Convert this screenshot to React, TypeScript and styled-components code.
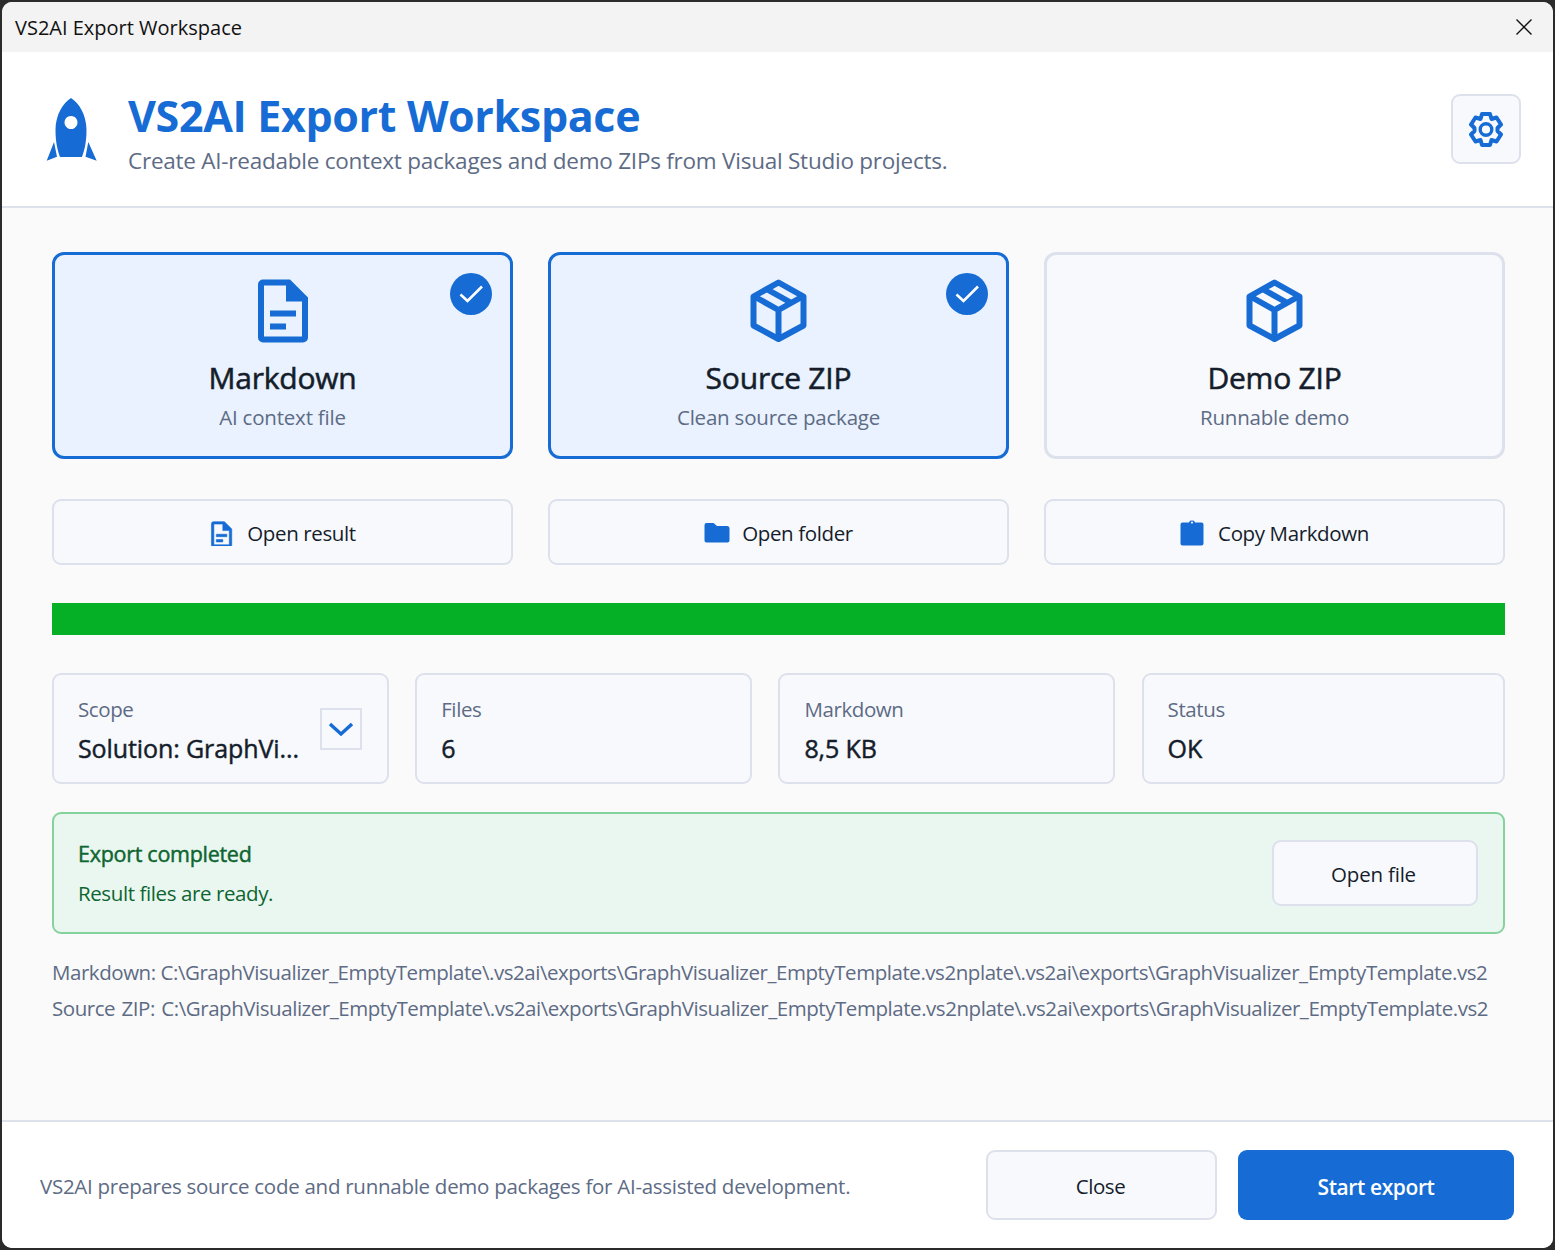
import React from "react";
import styled, { createGlobalStyle } from "styled-components";

const Global = createGlobalStyle`
  html, body { margin: 0; padding: 0; background: #2b2b2b; }
  * { box-sizing: border-box; }
  body { font-family: "Open Sans", "Noto Sans", sans-serif; }
`;

const blue = "#166cd4";

const Frame = styled.div`
  width: 1555px;
  height: 1250px;
  padding: 2px;
  background: #2b2b2b;
`;
const Win = styled.div`
  width: 1551px;
  height: 1246px;
  border-radius: 10px;
  overflow: hidden;
  background: #fafafa;
  display: flex;
  flex-direction: column;
`;
const TitleBar = styled.div`
  height: 50px;
  flex: none;
  background: #f3f3f3;
  display: flex;
  align-items: center;
  justify-content: space-between;
  padding: 0 21px 0 13px;
  color: #111;
  font-size: 20px;
`;
const CloseGlyph = styled.svg`
  width: 16px;
  height: 16px;
  display: block;
`;
const Header = styled.header`
  height: 156px;
  flex: none;
  background: #fff;
  border-bottom: 2px solid #dde1ec;
  display: flex;
  align-items: center;
  padding: 0 32px 0 42px;
`;
const Rocket = styled.svg`
  width: 54px;
  height: 66px;
  flex: none;
  margin: 0 30px 0 0;
  align-self: flex-start;
  margin-top: 46px;
`;
const HeaderText = styled.div`
  flex: 1;
  align-self: flex-start;
  margin-top: 37px;
  display: flex;
  flex-direction: column;
`;
const Heading = styled.h1`
  margin: 0;
  color: ${blue};
  font-size: 43px;
  line-height: 54px;
  font-weight: 700;
  letter-spacing: -0.35px;
`;
const Sub = styled.div`
  margin-top: 3px;
  color: #5d6b85;
  font-size: 22.5px;
  line-height: 30px;
  letter-spacing: -0.24px;
`;
const GearButton = styled.button`
  width: 70px;
  height: 70px;
  padding: 0;
  display: flex;
  align-items: center;
  justify-content: center;
  background: #f7f9fd;
  border: 2px solid #dde1ec;
  border-radius: 9px;
`;
const Main = styled.main`
  flex: 1;
  display: flex;
  flex-direction: column;
  padding: 44px 48px 0 50px;
  min-height: 0;
`;
const ThreeCols = styled.div`
  display: grid;
  grid-template-columns: repeat(3, 461px);
  column-gap: 35px;
`;
const Card = styled.div<{ $on?: boolean }>`
  position: relative;
  height: 207px;
  border-radius: 12px;
  border: 3px solid ${(p) => (p.$on ? blue : "#dde1ec")};
  background: ${(p) => (p.$on ? "#e9f2fe" : "#f8f9fd")};
  display: flex;
  flex-direction: column;
  align-items: center;
  padding-top: 22px;
`;
const CardIcon = styled.svg`
  width: 66px;
  height: 66px;
  display: block;
`;
const CardTitle = styled.div`
  margin-top: 15px;
  color: #151d2b;
  font-size: 30px;
  line-height: 40px;
  font-weight: 400;
  -webkit-text-stroke: 0.55px #151d2b;
  letter-spacing: -0.2px;
`;
const CardSub = styled.div`
  margin-top: 5px;
  color: #5d6b85;
  font-size: 20.5px;
  line-height: 28px;
  letter-spacing: -0.2px;
`;
const CheckBadge = styled.svg`
  position: absolute;
  top: 18px;
  right: 18px;
  width: 42px;
  height: 42px;
`;
const ActionRow = styled(ThreeCols)`
  margin-top: 40px;
`;
const ActionButton = styled.button`
  height: 66px;
  padding: 1px 0 0;
  display: flex;
  align-items: center;
  justify-content: center;
  gap: 12px;
  background: #f8f9fd;
  border: 2px solid #dde1ec;
  border-radius: 9px;
  color: #151d2b;
  font-family: inherit;
  font-size: 20.5px;
  letter-spacing: -0.38px;
`;
const ActionIcon = styled.svg`
  width: 26px;
  height: 26px;
  display: block;
  flex: none;
`;
const Progress = styled.div`
  margin-top: 38px;
  height: 32px;
  background: #05b026;
`;
const Stats = styled.div`
  margin-top: 38px;
  display: grid;
  grid-template-columns: 337px 337px 337px 1fr;
  column-gap: 26.2px;
`;
const Stat = styled.div`
  height: 111px;
  position: relative;
  background: #f8f9fd;
  border: 2px solid #dde1ec;
  border-radius: 9px;
  padding: 19px 24px 0;
`;
const StatLabel = styled.div`
  color: #5d6b85;
  font-size: 20.5px;
  line-height: 30px;
  letter-spacing: -0.4px;
`;
const StatValue = styled.div`
  margin-top: 8px;
  color: #151d2b;
  font-size: 25px;
  line-height: 32px;
  font-weight: 400;
  -webkit-text-stroke: 0.45px #151d2b;
  letter-spacing: -0.1px;
`;
const DropButton = styled.div`
  position: absolute;
  top: 33px;
  right: 25px;
  width: 42px;
  height: 42px;
  border: 2px solid #dde1ec;
  display: flex;
  align-items: center;
  justify-content: center;
`;
const Banner = styled.div`
  margin-top: 28px;
  height: 122px;
  background: #eaf7f0;
  border: 2px solid #84d29c;
  border-radius: 9px;
  display: flex;
  align-items: center;
  justify-content: space-between;
  padding: 0 25px 0 24px;
`;
const BannerTitle = styled.div`
  color: #0d6530;
  font-size: 21.5px;
  line-height: 30px;
  font-weight: 400;
  -webkit-text-stroke: 0.45px #0d6530;
  letter-spacing: -0.28px;
`;
const BannerText = styled.div`
  margin-top: 9px;
  color: #0d6530;
  font-size: 20.5px;
  line-height: 30px;
  letter-spacing: -0.4px;
`;
const OpenFile = styled.button`
  width: 206px;
  height: 66px;
  padding: 1px 3px 0 0;
  background: #f8f9fd;
  border: 2px solid #dde1ec;
  border-radius: 9px;
  color: #151d2b;
  font-family: inherit;
  font-size: 20.5px;
  letter-spacing: -0.2px;
`;
const Paths = styled.div`
  margin-top: 20px;
`;
const PathLine = styled.div`
  color: #5d6b85;
  font-size: 20.5px;
  line-height: 36px;
  letter-spacing: -0.45px;
  white-space: nowrap;
  overflow: hidden;
`;
const SourcePathLine = styled(PathLine)`
  word-spacing: 1.5px;
`;
const Footer = styled.footer`
  height: 128px;
  flex: none;
  background: #fff;
  border-top: 2px solid #dde1ec;
  display: flex;
  align-items: center;
  padding: 0 39px 0 38px;
`;
const FootNote = styled.div`
  flex: 1;
  padding-top: 2px;
  color: #5d6b85;
  font-size: 20.5px;
  letter-spacing: -0.27px;
`;
const CloseButton = styled.button`
  width: 231px;
  height: 70px;
  margin-right: 21px;
  padding: 2px 2px 0 0;
  background: #f8f9fd;
  border: 2px solid #dde1ec;
  border-radius: 9px;
  color: #151d2b;
  font-family: inherit;
  font-size: 20.5px;
  letter-spacing: -0.4px;
`;
const StartButton = styled.button`
  width: 276px;
  height: 70px;
  padding: 3px 0 0;
  background: ${blue};
  border: none;
  border-radius: 9px;
  color: #fff;
  font-family: inherit;
  font-size: 21px;
  font-weight: 600;
  letter-spacing: -0.4px;
`;

const DocPath = () => (
  <path
    fillRule="evenodd"
    d="M2.5 0 H16 L25 9 V29 a2.5 2.5 0 0 1 -2.5 2.5 H2.5 A2.5 2.5 0 0 1 0 29 V2.5 A2.5 2.5 0 0 1 2.5 0 Z M3 3 V28.5 H22 V11 H14 V3 Z M6 15.5 H19 V18.5 H6 Z M6 22 H14 V25 H6 Z"
    fill={blue}
  />
);
const DocIcon = () => (
  <CardIcon viewBox="-4 -1.25 33 33" aria-hidden="true">
    <DocPath />
  </CardIcon>
);
const BoxIcon = () => (
  <CardIcon viewBox="0.5 0 66 66" aria-hidden="true">
    <g fill="none" stroke={blue} strokeWidth="6" strokeLinejoin="round">
      <path d="M33 5.5 L58 19.5 V48.5 L33 62 L8 48.5 V19.5 Z" />
      <path d="M8 19 L33 33 L58 19 M33 33 V60" />
      <path d="M20 11.5 L46 26" />
    </g>
  </CardIcon>
);
const Check = () => (
  <CheckBadge viewBox="0 0 42 42" aria-hidden="true">
    <circle cx="21" cy="21" r="21" fill={blue} />
    <path d="M10.5 21.5 L17.5 28 L32 13.5" fill="none" stroke="#fff" strokeWidth="2.6" />
  </CheckBadge>
);

export default function App() {
  return (
    <Frame>
      <Global />
      <Win>
        <TitleBar>
          <span>VS2AI Export Workspace</span>
          <CloseGlyph viewBox="0 0 16 16" aria-hidden="true">
            <path d="M.5.5 L15.5 15.5 M15.5.5 L.5 15.5" stroke="#111" strokeWidth="1.4" fill="none" />
          </CloseGlyph>
        </TitleBar>
        <Header>
          <Rocket viewBox="0 0 54 66" aria-hidden="true">
            <path
              fillRule="evenodd"
              fill={blue}
              d="M27 0 C35 5 42.5 17 42.5 32 C42.5 46 40 53 38 59 H16 C14 53 11.5 46 11.5 32 C11.5 17 19 5 27 0 Z M27 18 a6.5 6.5 0 1 0 .01 0 Z"
            />
            <path fill={blue} d="M10 44 L13 58.7 L2.7 62.7 Z M44.3 44 L41.5 58.7 L52.7 62.7 Z" />
          </Rocket>
          <HeaderText>
            <Heading>VS2AI Export Workspace</Heading>
            <Sub>Create AI-readable context packages and demo ZIPs from Visual Studio projects.</Sub>
          </HeaderText>
          <GearButton aria-label="Settings">
            <svg width="34" height="35" viewBox="0 0 34 35" aria-hidden="true">
              <path
                fill="none"
                stroke={blue}
                strokeWidth="4"
                strokeLinejoin="round"
                d="M13 2 H21 L22.5 7 L27.5 5.5 L32 12.5 L28.5 16 V19 L32 22.5 L27.5 29.5 L22.5 28 L21 33 H13 L11.5 28 L6.5 29.5 L2 22.5 L5.5 19 V16 L2 12.5 L6.5 5.5 L11.5 7 Z"
              />
              <circle cx="17" cy="17.5" r="5.8" fill="none" stroke={blue} strokeWidth="3.4" />
            </svg>
          </GearButton>
        </Header>
        <Main>
          <ThreeCols>
            <Card $on>
              <DocIcon />
              <CardTitle>Markdown</CardTitle>
              <CardSub>AI context file</CardSub>
              <Check />
            </Card>
            <Card $on>
              <BoxIcon />
              <CardTitle>Source ZIP</CardTitle>
              <CardSub>Clean source package</CardSub>
              <Check />
            </Card>
            <Card>
              <BoxIcon />
              <CardTitle>Demo ZIP</CardTitle>
              <CardSub>Runnable demo</CardSub>
            </Card>
          </ThreeCols>
          <ActionRow>
            <ActionButton>
              <ActionIcon viewBox="-3 -2 32 32" aria-hidden="true">
                <g stroke={blue} strokeWidth="0.7">
                  <DocPath />
                </g>
              </ActionIcon>
              Open result
            </ActionButton>
            <ActionButton>
              <ActionIcon viewBox="0 0 26 26" aria-hidden="true">
                <path fill={blue} d="M2.5 3 H9.5 L13 6 H23 A2.5 2.5 0 0 1 25.5 8.5 V20.5 A2 2 0 0 1 23.5 22.5 H2.5 A2 2 0 0 1 .5 20.5 V5 A2 2 0 0 1 2.5 3 Z" />
              </ActionIcon>
              Open folder
            </ActionButton>
            <ActionButton>
              <ActionIcon viewBox="1 0 26 26" aria-hidden="true">
                <path
                  fillRule="evenodd"
                  fill={blue}
                  d="M3.5 2.5 H10 L11 .8 Q13 0 15 .8 L16 2.5 H22.5 A2 2 0 0 1 24.5 4.5 V23.5 A2 2 0 0 1 22.5 25.5 H3.5 A2 2 0 0 1 1.5 23.5 V4.5 A2 2 0 0 1 3.5 2.5 Z M13 1.6 a1 1 0 1 0 .01 0 Z"
                />
              </ActionIcon>
              Copy Markdown
            </ActionButton>
          </ActionRow>
          <Progress />
          <Stats>
            <Stat>
              <StatLabel>Scope</StatLabel>
              <StatValue>Solution: GraphVi...</StatValue>
              <DropButton>
                <svg width="26" height="16" viewBox="0 0 26 16" aria-hidden="true">
                  <path d="M2 3 L13 13 L24 3" fill="none" stroke={blue} strokeWidth="3.4" />
                </svg>
              </DropButton>
            </Stat>
            <Stat>
              <StatLabel>Files</StatLabel>
              <StatValue>6</StatValue>
            </Stat>
            <Stat>
              <StatLabel>Markdown</StatLabel>
              <StatValue>8,5 KB</StatValue>
            </Stat>
            <Stat>
              <StatLabel>Status</StatLabel>
              <StatValue>OK</StatValue>
            </Stat>
          </Stats>
          <Banner>
            <div>
              <BannerTitle>Export completed</BannerTitle>
              <BannerText>Result files are ready.</BannerText>
            </div>
            <OpenFile>Open file</OpenFile>
          </Banner>
          <Paths>
            <PathLine>Markdown: C:\GraphVisualizer_EmptyTemplate\.vs2ai\exports\GraphVisualizer_EmptyTemplate.vs2nplate\.vs2ai\exports\GraphVisualizer_EmptyTemplate.vs2</PathLine>
            <SourcePathLine>Source ZIP: C:\GraphVisualizer_EmptyTemplate\.vs2ai\exports\GraphVisualizer_EmptyTemplate.vs2nplate\.vs2ai\exports\GraphVisualizer_EmptyTemplate.vs2</SourcePathLine>
          </Paths>
        </Main>
        <Footer>
          <FootNote>VS2AI prepares source code and runnable demo packages for AI-assisted development.</FootNote>
          <CloseButton>Close</CloseButton>
          <StartButton>Start export</StartButton>
        </Footer>
      </Win>
    </Frame>
  );
}
